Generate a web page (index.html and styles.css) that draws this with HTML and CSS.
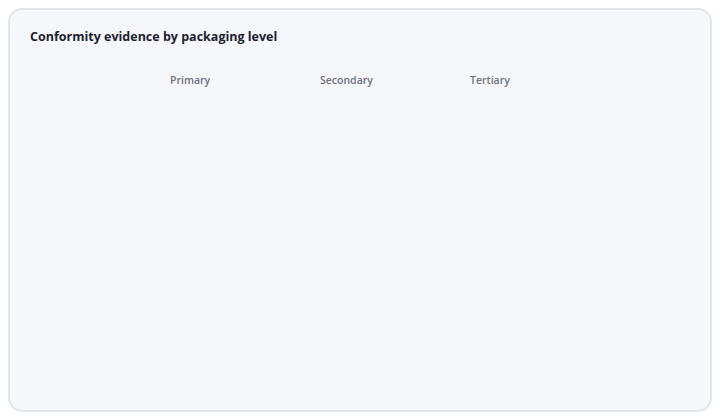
FILE: index.html
```html
<!DOCTYPE html>
<html lang="en">
<head>
    <meta charset="UTF-8">
    <title>Conformity evidence</title>
    <link rel="stylesheet" href="styles.css">
</head>
<body>
    <div class="card">
        <h2 class="card-title">Conformity evidence by packaging level</h2>
        <div class="level-grid">
            <div class="row-head"></div>
            <div class="col-head">Primary</div>
            <div class="col-head">Secondary</div>
            <div class="col-head">Tertiary</div>
        </div>
    </div>
</body>
</html>
```

FILE: styles.css
```css
body {
    margin: 8px;
    font-family: "Open Sans", "Noto Sans", sans-serif;
    background: #ffffff;
}

.card {
    box-sizing: border-box;
    height: 404px;
    padding: 18px 20px;
    border: 2px solid #e1e5ec;
    border-radius: 14px;
    background: #f6f7fb;
}

.card-title {
    margin: 0;
    font-size: 12.5px;
    font-weight: 700;
    line-height: 18px;
    color: #1b2230;
}

.level-grid {
    display: grid;
    grid-template-columns: 140px 150px 150px 150px;
    margin-top: 26px;
}

.col-head {
    font-size: 10.5px;
    font-weight: 600;
    line-height: 16px;
    color: #6b7280;
}
```
